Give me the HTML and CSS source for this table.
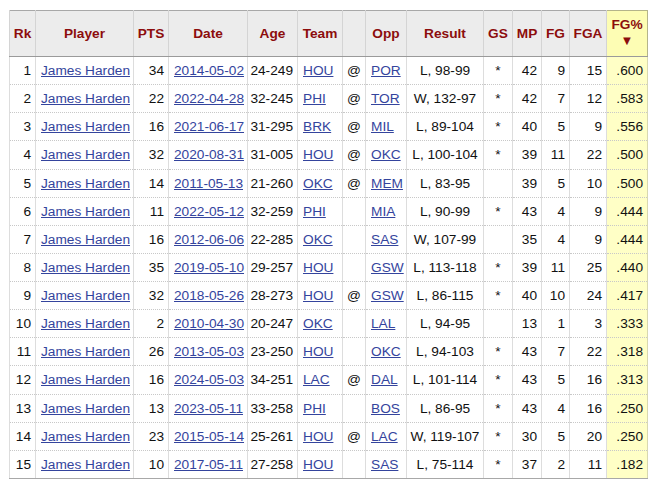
FILE: index.html
```html
<!DOCTYPE html>
<html>
<head>
<meta charset="utf-8">
<link rel="stylesheet" href="styles.css">
</head>
<body>
<div class="wrap">
<table class="stats">
<colgroup>
<col class="c-rk"><col class="c-player"><col class="c-pts"><col class="c-date"><col class="c-age"><col class="c-team"><col class="c-at"><col class="c-opp"><col class="c-result"><col class="c-gs"><col class="c-mp"><col class="c-fg"><col class="c-fga"><col class="c-pct">
</colgroup>
<thead>
<tr>
<th>Rk</th><th>Player</th><th>PTS</th><th>Date</th><th>Age</th><th>Team</th><th></th><th>Opp</th><th>Result</th><th>GS</th><th>MP</th><th>FG</th><th>FGA</th><th class="sorted"><span class="lbl">FG%</span><span class="arrow">▼</span></th>
</tr>
</thead>
<tbody>
<tr><td class="r">1</td><td class="l"><a>James Harden</a></td><td class="r">34</td><td class="l"><a>2014-05-02</a></td><td class="r">24-249</td><td class="l"><a>HOU</a></td><td class="c">@</td><td class="l"><a>POR</a></td><td class="c">L, 98-99</td><td class="c">*</td><td class="r">42</td><td class="r">9</td><td class="r">15</td><td class="r pct">.600</td></tr>
<tr><td class="r">2</td><td class="l"><a>James Harden</a></td><td class="r">22</td><td class="l"><a>2022-04-28</a></td><td class="r">32-245</td><td class="l"><a>PHI</a></td><td class="c">@</td><td class="l"><a>TOR</a></td><td class="c">W, 132-97</td><td class="c">*</td><td class="r">42</td><td class="r">7</td><td class="r">12</td><td class="r pct">.583</td></tr>
<tr><td class="r">3</td><td class="l"><a>James Harden</a></td><td class="r">16</td><td class="l"><a>2021-06-17</a></td><td class="r">31-295</td><td class="l"><a>BRK</a></td><td class="c">@</td><td class="l"><a>MIL</a></td><td class="c">L, 89-104</td><td class="c">*</td><td class="r">40</td><td class="r">5</td><td class="r">9</td><td class="r pct">.556</td></tr>
<tr><td class="r">4</td><td class="l"><a>James Harden</a></td><td class="r">32</td><td class="l"><a>2020-08-31</a></td><td class="r">31-005</td><td class="l"><a>HOU</a></td><td class="c">@</td><td class="l"><a>OKC</a></td><td class="c">L, 100-104</td><td class="c">*</td><td class="r">39</td><td class="r">11</td><td class="r">22</td><td class="r pct">.500</td></tr>
<tr><td class="r">5</td><td class="l"><a>James Harden</a></td><td class="r">14</td><td class="l"><a>2011-05-13</a></td><td class="r">21-260</td><td class="l"><a>OKC</a></td><td class="c">@</td><td class="l"><a>MEM</a></td><td class="c">L, 83-95</td><td class="c"></td><td class="r">39</td><td class="r">5</td><td class="r">10</td><td class="r pct">.500</td></tr>
<tr><td class="r">6</td><td class="l"><a>James Harden</a></td><td class="r">11</td><td class="l"><a>2022-05-12</a></td><td class="r">32-259</td><td class="l"><a>PHI</a></td><td class="c"></td><td class="l"><a>MIA</a></td><td class="c">L, 90-99</td><td class="c">*</td><td class="r">43</td><td class="r">4</td><td class="r">9</td><td class="r pct">.444</td></tr>
<tr><td class="r">7</td><td class="l"><a>James Harden</a></td><td class="r">16</td><td class="l"><a>2012-06-06</a></td><td class="r">22-285</td><td class="l"><a>OKC</a></td><td class="c"></td><td class="l"><a>SAS</a></td><td class="c">W, 107-99</td><td class="c"></td><td class="r">35</td><td class="r">4</td><td class="r">9</td><td class="r pct">.444</td></tr>
<tr><td class="r">8</td><td class="l"><a>James Harden</a></td><td class="r">35</td><td class="l"><a>2019-05-10</a></td><td class="r">29-257</td><td class="l"><a>HOU</a></td><td class="c"></td><td class="l"><a>GSW</a></td><td class="c">L, 113-118</td><td class="c">*</td><td class="r">39</td><td class="r">11</td><td class="r">25</td><td class="r pct">.440</td></tr>
<tr><td class="r">9</td><td class="l"><a>James Harden</a></td><td class="r">32</td><td class="l"><a>2018-05-26</a></td><td class="r">28-273</td><td class="l"><a>HOU</a></td><td class="c">@</td><td class="l"><a>GSW</a></td><td class="c">L, 86-115</td><td class="c">*</td><td class="r">40</td><td class="r">10</td><td class="r">24</td><td class="r pct">.417</td></tr>
<tr><td class="r">10</td><td class="l"><a>James Harden</a></td><td class="r">2</td><td class="l"><a>2010-04-30</a></td><td class="r">20-247</td><td class="l"><a>OKC</a></td><td class="c"></td><td class="l"><a>LAL</a></td><td class="c">L, 94-95</td><td class="c"></td><td class="r">13</td><td class="r">1</td><td class="r">3</td><td class="r pct">.333</td></tr>
<tr><td class="r">11</td><td class="l"><a>James Harden</a></td><td class="r">26</td><td class="l"><a>2013-05-03</a></td><td class="r">23-250</td><td class="l"><a>HOU</a></td><td class="c"></td><td class="l"><a>OKC</a></td><td class="c">L, 94-103</td><td class="c">*</td><td class="r">43</td><td class="r">7</td><td class="r">22</td><td class="r pct">.318</td></tr>
<tr><td class="r">12</td><td class="l"><a>James Harden</a></td><td class="r">16</td><td class="l"><a>2024-05-03</a></td><td class="r">34-251</td><td class="l"><a>LAC</a></td><td class="c">@</td><td class="l"><a>DAL</a></td><td class="c">L, 101-114</td><td class="c">*</td><td class="r">43</td><td class="r">5</td><td class="r">16</td><td class="r pct">.313</td></tr>
<tr><td class="r">13</td><td class="l"><a>James Harden</a></td><td class="r">13</td><td class="l"><a>2023-05-11</a></td><td class="r">33-258</td><td class="l"><a>PHI</a></td><td class="c"></td><td class="l"><a>BOS</a></td><td class="c">L, 86-95</td><td class="c">*</td><td class="r">43</td><td class="r">4</td><td class="r">16</td><td class="r pct">.250</td></tr>
<tr><td class="r">14</td><td class="l"><a>James Harden</a></td><td class="r">23</td><td class="l"><a>2015-05-14</a></td><td class="r">25-261</td><td class="l"><a>HOU</a></td><td class="c">@</td><td class="l"><a>LAC</a></td><td class="c">W, 119-107</td><td class="c">*</td><td class="r">30</td><td class="r">5</td><td class="r">20</td><td class="r pct">.250</td></tr>
<tr><td class="r">15</td><td class="l"><a>James Harden</a></td><td class="r">10</td><td class="l"><a>2017-05-11</a></td><td class="r">27-258</td><td class="l"><a>HOU</a></td><td class="c"></td><td class="l"><a>SAS</a></td><td class="c">L, 75-114</td><td class="c">*</td><td class="r">37</td><td class="r">2</td><td class="r">11</td><td class="r pct">.182</td></tr>
</tbody>
</table>
</div>
</body>
</html>
```
FILE: styles.css
```css
html, body {
  margin: 0;
  padding: 0;
  background: #ffffff;
}
.wrap {
  padding: 10px 0 0 9px;
}
.stats {
  border-collapse: collapse;
  table-layout: fixed;
  width: 638px;
  font-family: "Liberation Sans", Arial, sans-serif;
  font-size: 13.7px;
  color: #111111;
  border: 1px solid #a8a8a8;
}
.c-rk { width: 26px; }
.c-player { width: 98px; }
.c-pts { width: 35px; }
.c-date { width: 79px; }
.c-age { width: 50px; }
.c-team { width: 45px; }
.c-at { width: 23px; }
.c-opp { width: 41px; }
.c-result { width: 77px; }
.c-gs { width: 29px; }
.c-mp { width: 29px; }
.c-fg { width: 28px; }
.c-fga { width: 37px; }
.c-pct { width: 41px; }

.stats th {
  background: #ececec;
  color: #8c0d0d;
  font-weight: bold;
  text-align: center;
  height: 39px;
  padding: 0 2px;
  line-height: 17px;
  border-left: 1px solid #d4d4d4;
  border-right: 1px solid #d4d4d4;
  border-bottom: 1px solid #9a9a9a;
  white-space: nowrap;
}
.stats th.sorted {
  background: #fdfdb4;
  border: 1px solid #b4b48a;
  border-bottom: 1px solid #9a9a9a;
  vertical-align: top;
  padding-top: 6px;
}
.lbl {
  display: block;
  height: 16px;
  line-height: 16px;
}
.arrow {
  display: block;
  height: 16px;
  line-height: 16px;
  font-size: 13px;
  overflow: hidden;
}
.stats td {
  height: 27.14px;
  padding: 0 4px 0 5px;
  line-height: 17px;
  border-left: 1px solid #dddddd;
  border-right: 1px solid #dddddd;
  border-bottom: 1px dotted #c8c8c8;
  white-space: nowrap;
}
.stats tbody tr:last-child td {
  border-bottom: 1px solid #a8a8a8;
}
.stats td.r { text-align: right; padding: 0 4px 0 2px; }
.stats td.l { text-align: left; }
.stats td.c { text-align: center; padding: 0 2px; }
.stats td.pct {
  background: #ffffc6;
  border-left: 1px solid #d8d8b0;
  border-right: 1px solid #d8d8b0;
}
.stats a {
  color: #34449d;
  text-decoration: underline;
}
```
